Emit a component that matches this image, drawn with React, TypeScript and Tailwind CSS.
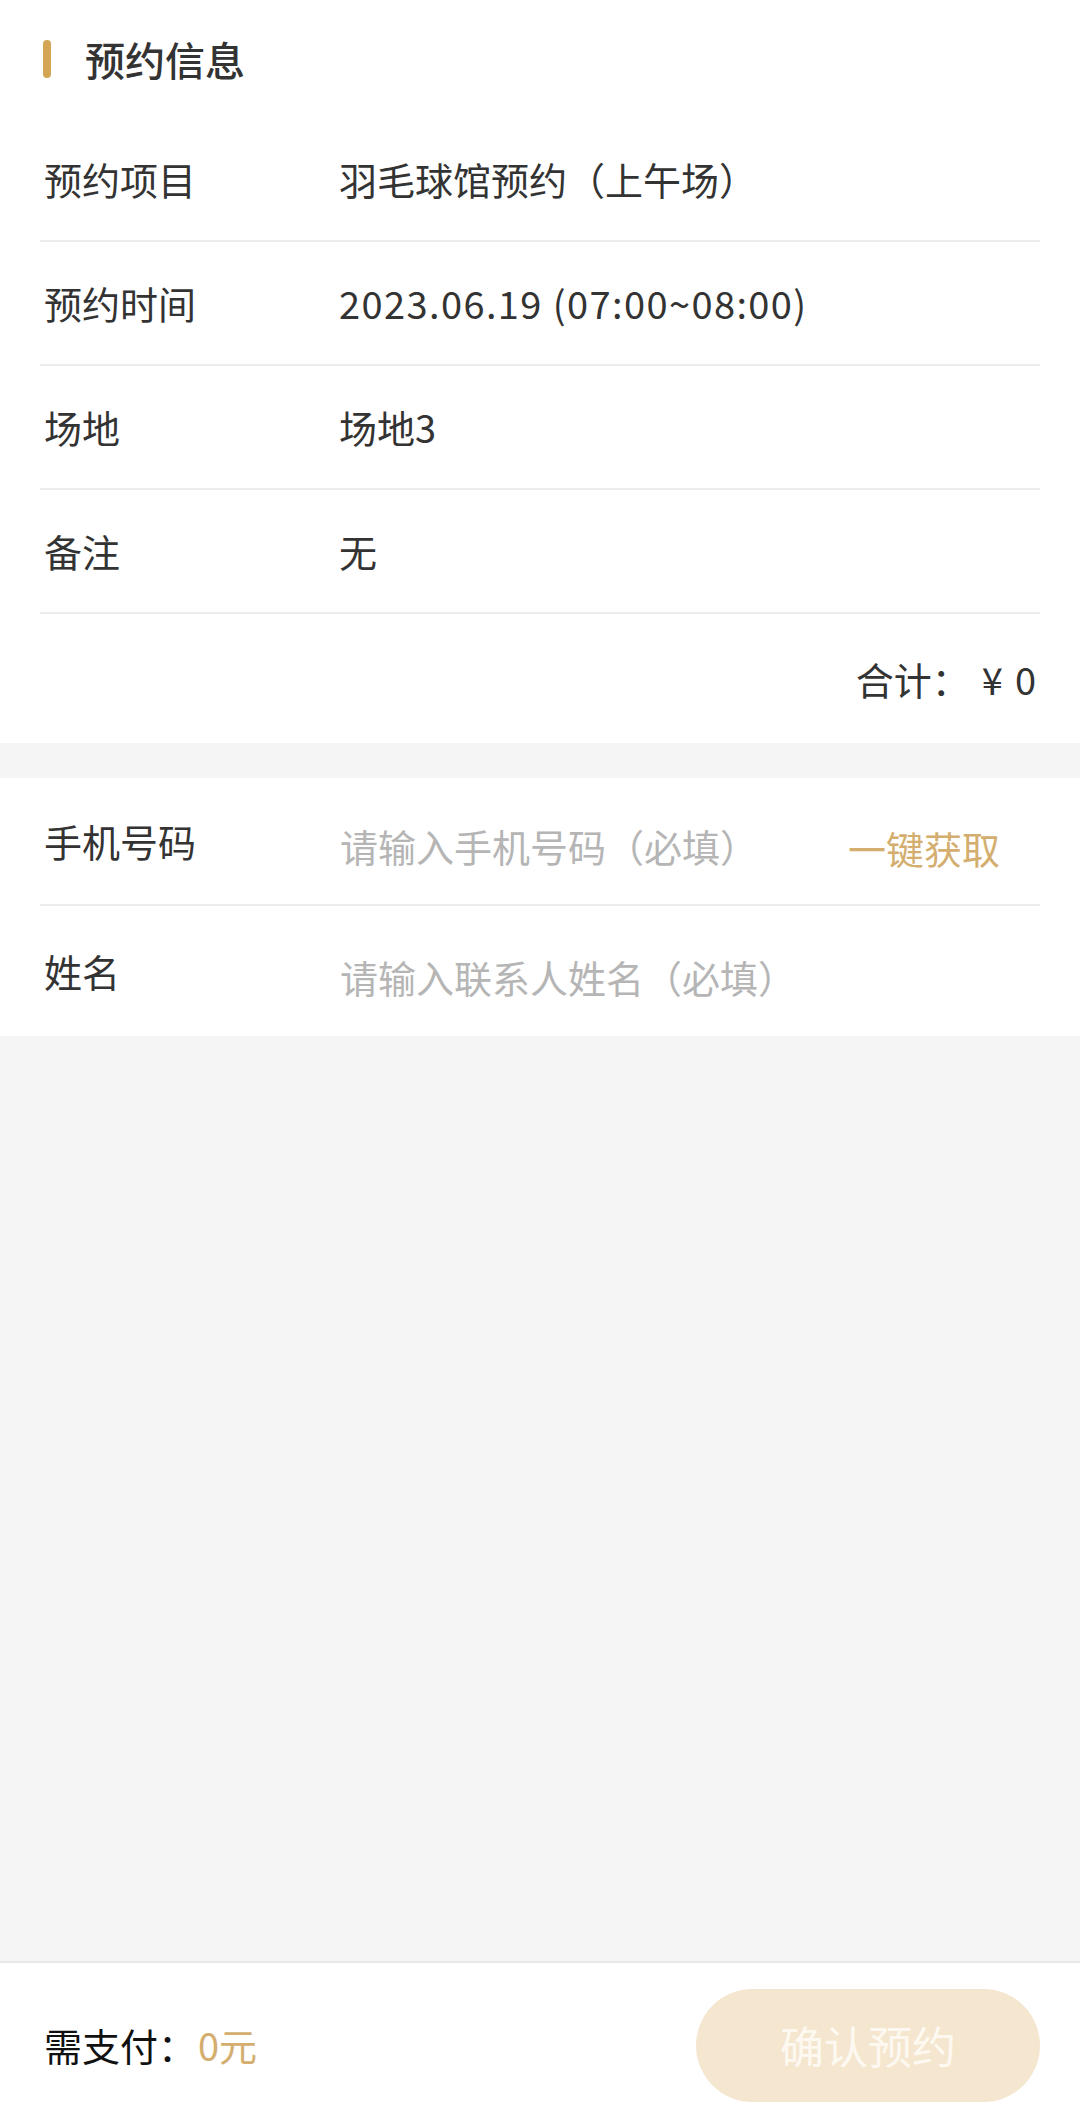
import React from "react";

const font = { fontFamily: '"Noto Sans CJK SC", "Noto Sans", sans-serif' };

function InfoRow({ label, value, valueClass }: { label: string; value: string; valueClass?: string }) {
  return (
    <div className="flex h-[124px] items-center border-b-2 border-[#ececec]">
      <div className="w-[296px] shrink-0 pl-[4px] text-[38px] leading-none text-[#333333]">{label}</div>
      <div className={"pl-[3px] text-[38px] leading-none text-[#333333] " + (valueClass ?? "")}>{value}</div>
    </div>
  );
}

export default function App() {
  return (
    <div className="flex h-[2127px] w-[1080px] flex-col bg-[#f5f5f5]" style={font}>
      <section className="bg-white px-[40px]">
        <div className="flex h-[118px] items-center">
          <div className="ml-[3px] h-[38px] w-[8px] rounded-full bg-[#d4a653]" />
          <div className="ml-[34px] text-[40px] font-medium leading-none text-[#333333]">预约信息</div>
        </div>
        <InfoRow label="预约项目" value="羽毛球馆预约（上午场）" />
        <InfoRow label="预约时间" value="2023.06.19 (07:00~08:00)" valueClass="tracking-[1.4px]" />
        <InfoRow label="场地" value="场地3" />
        <InfoRow label="备注" value="无" />
        <div className="flex h-[129px] items-center justify-end pr-[4px]">
          <span className="text-[38px] leading-none text-[#333333]">合计：</span>
          <span className="ml-[12px] text-[38px] leading-none text-[#333333]">¥</span>
          <span className="ml-[12px] text-[38px] leading-none text-[#333333]">0</span>
        </div>
      </section>

      <section className="mt-[35px] bg-white px-[40px]">
        <div className="flex h-[128px] items-center border-b-2 border-[#ececec]">
          <div className="w-[296px] shrink-0 pl-[4px] text-[38px] leading-none text-[#333333]">手机号码</div>
          <div className="flex-1 pl-[4px] pt-[10px] text-[38px] leading-none text-[#b5b5b5]">请输入手机号码（必填）</div>
          <div className="mr-[40px] pt-[14px] text-[38px] leading-none text-[#d4ae6e]">一键获取</div>
        </div>
        <div className="flex h-[130px] items-center">
          <div className="w-[296px] shrink-0 pl-[4px] text-[38px] leading-none text-[#333333]">姓名</div>
          <div className="flex-1 pl-[4px] pt-[12px] text-[38px] leading-none text-[#b5b5b5]">请输入联系人姓名（必填）</div>
        </div>
      </section>

      <div className="flex-1" />

      <footer className="flex h-[166px] items-center justify-between border-t-2 border-[#e8e8e8] bg-white px-[40px]">
        <div className="pl-[4px] text-[38px] leading-none text-[#111111]">
          需支付：<span className="ml-[2px] text-[#d4ae6e]">0元</span>
        </div>
        <button className="flex h-[113px] w-[344px] items-center justify-center rounded-full bg-[#f5e6cf] text-[44px] leading-none text-[#fdf9f1]">
          确认预约
        </button>
      </footer>
    </div>
  );
}
